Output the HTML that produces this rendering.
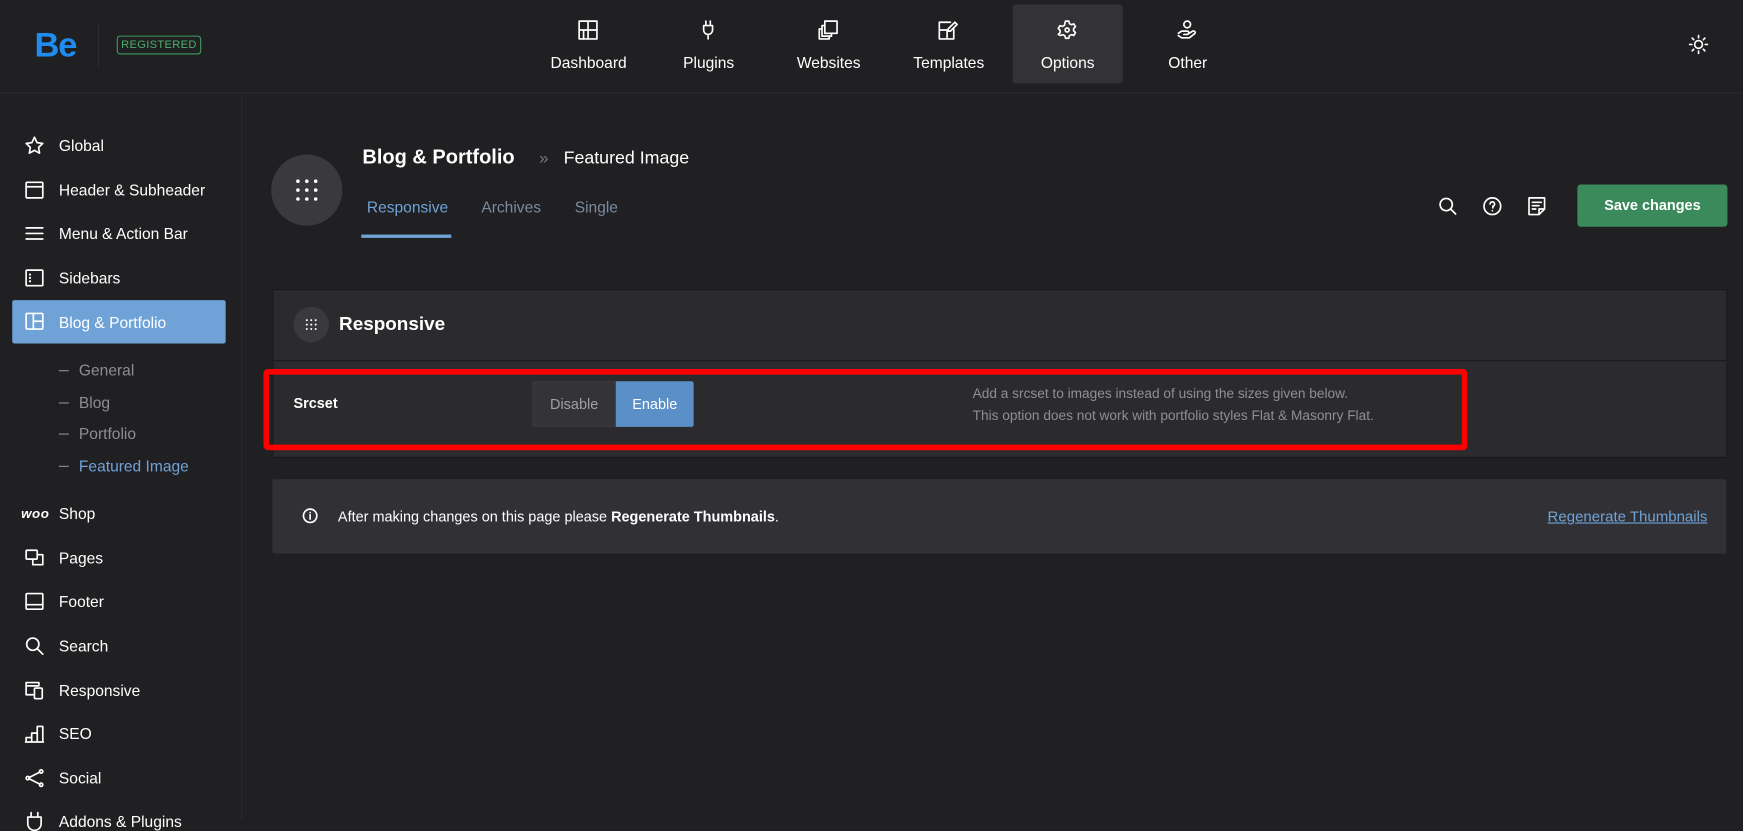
<!DOCTYPE html>
<html><head><meta charset="utf-8">
<style>
html,body{margin:0;padding:0;background:#202022;overflow:hidden;width:1743px;height:820px}
#w{position:absolute;left:0;top:0;width:1568px;height:738px;transform:scale(1.11161);transform-origin:0 0;font-family:"Liberation Sans",sans-serif;color:#fff;background:#202022}
.a{position:absolute}
svg{position:absolute;fill:none;stroke:#fff;stroke-width:1.5;stroke-linecap:round;stroke-linejoin:round}
.nav{position:absolute;top:4px;width:99px;height:71px;text-align:center;font-size:14px}
.nav span{position:absolute;left:0;right:0;top:44px}
.nav svg{left:40px;top:14px}
.si{position:absolute;left:53px;font-size:14px;color:#fff}
.sub{position:absolute;left:53px;font-size:14px;color:#8e8e92}
.sub:before{content:"";position:absolute;left:0;top:8px;width:9px;height:1px;background:#8e8e92}
.sub b{font-weight:normal;margin-left:18px}
</style></head><body><div id="w">
<div class="a" style="left:0;top:83px;width:1568px;height:1px;background:#2c2c2f"></div>
<div class="a" style="left:31px;top:23px;font-size:31px;font-weight:bold;color:#1f8cf0;letter-spacing:-1px">Be</div>
<div class="a" style="left:88px;top:20px;width:1px;height:40px;background:#2e2e31"></div>
<div class="a" style="left:105px;top:32px;width:74px;height:15px;border:1px solid #3f9a5f;border-radius:3px;color:#4caf6e;font-size:10px;text-align:center;line-height:16px;letter-spacing:.3px">REGISTERED</div>

<div class="nav" style="left:480px"><svg width="18" height="18" viewBox="0 0 18 18"><rect x="1" y="1" width="16" height="16"/><path d="M9 1v16M1 9h16M5 9v8"/></svg><span>Dashboard</span></div>
<div class="nav" style="left:588px"><svg width="18" height="18" viewBox="0 0 18 18"><path d="M7 1v4M11 1v4M5 5h8v4a4 4 0 0 1-8 0zM9 13v4"/></svg><span>Plugins</span></div>
<div class="nav" style="left:696px"><svg width="18" height="18" viewBox="0 0 18 18"><rect x="6" y="1" width="11" height="11"/><path d="M6 5H3.5v9.5H12V12M3.5 8H1v9h9v-2.5"/></svg><span>Websites</span></div>
<div class="nav" style="left:804px"><svg width="18" height="18" viewBox="0 0 18 18"><path d="M14 8v9H1V2h10M1 9h7v8"/><path d="M15 2l2 2-6 6H9V8z"/></svg><span>Templates</span></div>
<div class="a" style="left:911px;top:4px;width:99px;height:71px;background:#333336;border-radius:3px"></div>
<div class="nav" style="left:911px"><svg width="18" height="18" viewBox="0 0 18 18"><path d="M7.5 1h3l.5 2.2 1.8 1 2.2-.7 1.5 2.6-1.7 1.6v2l1.7 1.6-1.5 2.6-2.2-.7-1.8 1-.5 2.2h-3l-.5-2.2-1.8-1-2.2.7L1 12.9l1.7-1.6v-2L1 7.7l1.5-2.6 2.2.7 1.8-1z"/><circle cx="9" cy="9" r="1.8"/></svg><span>Options</span></div>
<div class="nav" style="left:1019px"><svg width="18" height="18" viewBox="0 0 18 18"><circle cx="9" cy="4" r="3"/><path d="M1 12l3-2h5a1.5 1.5 0 0 1 0 3H6M9 13l5-3a1.5 1.5 0 0 1 2 2l-5 4H4l-3-2"/></svg><span>Other</span></div>
<svg style="left:1519px;top:31px" width="18" height="18" viewBox="0 0 18 18"><circle cx="9" cy="9" r="3.5"/><path d="M9 1v2M9 15v2M1 9h2M15 9h2M3.3 3.3l1.4 1.4M13.3 13.3l1.4 1.4M3.3 14.7l1.4-1.4M13.3 4.7l1.4-1.4"/></svg>

<div class="a" style="left:217px;top:84px;width:1px;height:654px;background:#2a2a2d"></div>
<svg style="left:22px;top:122px" width="18" height="18" viewBox="0 0 18 18"><path d="M9 1.5l2.3 4.8 5.2.7-3.8 3.6.9 5.2L9 13.3l-4.6 2.5.9-5.2L1.5 7l5.2-.7z"/></svg>
<div class="si" style="top:123px">Global</div>
<svg style="left:22px;top:162px" width="18" height="18" viewBox="0 0 18 18"><rect x="1.5" y="2" width="15" height="14" rx="1"/><path d="M1.5 6h15"/></svg>
<div class="si" style="top:163px">Header &amp; Subheader</div>
<svg style="left:22px;top:201px" width="18" height="18" viewBox="0 0 18 18"><path d="M1.5 4h15M1.5 9h15M1.5 14h15"/></svg>
<div class="si" style="top:202px">Menu &amp; Action Bar</div>
<svg style="left:22px;top:241px" width="18" height="18" viewBox="0 0 18 18"><rect x="1.5" y="2" width="15" height="14" rx="1"/><path d="M5 6v0M5 9v0M5 12v0" stroke-width="2"/></svg>
<div class="si" style="top:242px">Sidebars</div>
<div class="a" style="left:11px;top:270px;width:192px;height:39px;background:#6fa3d8;border-radius:2px"></div>
<svg style="left:22px;top:280px" width="18" height="18" viewBox="0 0 18 18"><rect x="1.5" y="2" width="15" height="14" rx="1"/><path d="M8 2v14M8 9h8.5"/></svg>
<div class="si" style="top:282px">Blog &amp; Portfolio</div>
<div class="sub" style="top:325px"><b>General</b></div>
<div class="sub" style="top:354px"><b>Blog</b></div>
<div class="sub" style="top:382px"><b>Portfolio</b></div>
<div class="sub" style="top:411px;color:#6fa3d8"><b>Featured Image</b></div>
<div class="a" style="left:19px;top:455px;font-size:12px;font-weight:bold;font-style:italic;letter-spacing:.5px">woo</div>
<div class="si" style="top:454px">Shop</div>
<svg style="left:22px;top:493px" width="18" height="18" viewBox="0 0 18 18"><rect x="1.5" y="2" width="10" height="8" rx="1"/><path d="M11.5 6h5v9h-9v-5"/></svg>
<div class="si" style="top:494px">Pages</div>
<svg style="left:22px;top:532px" width="18" height="18" viewBox="0 0 18 18"><rect x="1.5" y="2" width="15" height="14" rx="1"/><path d="M1.5 12h15"/></svg>
<div class="si" style="top:533px">Footer</div>
<svg style="left:22px;top:572px" width="18" height="18" viewBox="0 0 18 18"><circle cx="7.5" cy="7.5" r="5.5"/><path d="M11.5 11.5l5 5"/></svg>
<div class="si" style="top:573px">Search</div>
<svg style="left:22px;top:612px" width="18" height="18" viewBox="0 0 18 18"><path d="M13 4V2H1.5v11H8M1.5 5h11.5"/><rect x="9" y="7" width="7" height="9.5" rx="1"/></svg>
<div class="si" style="top:613px">Responsive</div>
<svg style="left:22px;top:651px" width="18" height="18" viewBox="0 0 18 18"><path d="M1 16.5h16M1.5 16.5v-4h5v4M6.5 16.5v-8h5v8M11.5 16.5v-14h5v14"/></svg>
<div class="si" style="top:652px">SEO</div>
<svg style="left:22px;top:691px" width="18" height="18" viewBox="0 0 18 18"><circle cx="15" cy="3" r="1.5"/><circle cx="15" cy="15" r="1.5"/><circle cx="3" cy="9" r="1.5"/><path d="M14 3.5L4 8.5M14 14.5L4 9.5"/></svg>
<div class="si" style="top:692px">Social</div>
<svg style="left:22px;top:730px" width="18" height="18" viewBox="0 0 18 18"><path d="M6 1v4M12 1v4M3 5h12v6a6 6 0 0 1-12 0z"/></svg>
<div class="si" style="top:731px">Addons &amp; Plugins</div>

<div class="a" style="left:244px;top:139px;width:64px;height:64px;border-radius:50%;background:#3a3a3d"></div>
<svg style="left:264px;top:159px;stroke:none;fill:#fff" width="24" height="24" viewBox="0 0 24 24"><circle cx="4" cy="4" r="1.6"/><circle cx="12" cy="4" r="1.6"/><circle cx="20" cy="4" r="1.6"/><circle cx="4" cy="12" r="1.6"/><circle cx="12" cy="12" r="1.6"/><circle cx="20" cy="12" r="1.6"/><circle cx="4" cy="20" r="1.6"/><circle cx="12" cy="20" r="1.6"/><circle cx="20" cy="20" r="1.6"/></svg>
<div class="a" style="left:326px;top:131px;font-size:18px;font-weight:bold">Blog &amp; Portfolio</div>
<div class="a" style="left:485px;top:134px;font-size:15px;color:#77777c">»</div>
<div class="a" style="left:507px;top:134px;font-size:16px">Featured Image</div>
<div class="a" style="left:330px;top:178px;font-size:14px;color:#6fa3d8">Responsive</div>
<div class="a" style="left:433px;top:178px;font-size:14px;color:#7b8aa0">Archives</div>
<div class="a" style="left:517px;top:178px;font-size:14px;color:#7b8aa0">Single</div>
<div class="a" style="left:325px;top:211px;width:81px;height:3px;background:#6fa3d8"></div>
<svg style="left:1294px;top:177px" width="17" height="17" viewBox="0 0 17 17"><circle cx="7" cy="7" r="5.5"/><path d="M11 11l4.5 4.5"/></svg>
<svg style="left:1334px;top:177px" width="17" height="17" viewBox="0 0 17 17"><circle cx="8.5" cy="8.5" r="7.5"/><path d="M6.5 6.5a2 2 0 1 1 2.5 2v1.5M8.5 12.5v.1"/></svg>
<svg style="left:1374px;top:177px" width="17" height="17" viewBox="0 0 17 17"><path d="M10.5 16H1.5V1h14v10zM15.5 11h-5v5M4.5 5h8M4.5 8h6M4.5 11h3"/></svg>
<div class="a" style="left:1419px;top:166px;width:135px;height:38px;background:#3a8a5c;border-radius:3px;font-size:13px;font-weight:bold;text-align:center;line-height:38px">Save changes</div>

<div class="a" style="left:245px;top:260px;width:1307px;height:150px;background:#2b2b2e;border:1px solid #1a1a1c"></div>
<div class="a" style="left:246px;top:324px;width:1307px;height:1px;background:#1a1a1c"></div>
<div class="a" style="left:264px;top:276px;width:32px;height:32px;border-radius:50%;background:#3a3a3d"></div>
<svg style="left:274px;top:286px;stroke:none;fill:#fff" width="12" height="12" viewBox="0 0 12 12"><circle cx="2" cy="2" r=".9"/><circle cx="6" cy="2" r=".9"/><circle cx="10" cy="2" r=".9"/><circle cx="2" cy="6" r=".9"/><circle cx="6" cy="6" r=".9"/><circle cx="10" cy="6" r=".9"/><circle cx="2" cy="10" r=".9"/><circle cx="6" cy="10" r=".9"/><circle cx="10" cy="10" r=".9"/></svg>
<div class="a" style="left:305px;top:282px;font-size:17px;font-weight:bold">Responsive</div>
<div class="a" style="left:264px;top:355px;font-size:13px;font-weight:bold">Srcset</div>
<div class="a" style="left:479px;top:343px;width:75px;height:41px;background:#343437;border:1px solid #3c3c40;box-sizing:border-box;font-size:13px;color:#a0a0a5;text-align:center;line-height:40px;border-radius:2px 0 0 2px">Disable</div>
<div class="a" style="left:554px;top:343px;width:70px;height:41px;background:#5b8fc7;font-size:13px;text-align:center;line-height:41px;border-radius:0 2px 2px 0">Enable</div>
<div class="a" style="left:875px;top:344px;font-size:12.3px;color:#8e8e94;line-height:20px">Add a srcset to images instead of using the sizes given below.<br>This option does not work with portfolio styles Flat &amp; Masonry Flat.</div>
<div class="a" style="left:237px;top:332px;width:1073px;height:63px;border:5px solid #ff0000;border-radius:4px"></div>

<div class="a" style="left:245px;top:431px;width:1308px;height:67px;background:#313135;border-radius:2px"></div>
<svg style="left:272px;top:457px" width="14" height="14" viewBox="0 0 14 14"><circle cx="7" cy="7" r="6"/><path d="M7 6v4M7 4v.1"/></svg>
<div class="a" style="left:304px;top:457px;font-size:13px">After making changes on this page please <b>Regenerate Thumbnails</b>.</div>
<div class="a" style="right:32px;top:457px;font-size:13.5px;color:#6fa3d8;text-decoration:underline">Regenerate Thumbnails</div>
</div></body></html>
